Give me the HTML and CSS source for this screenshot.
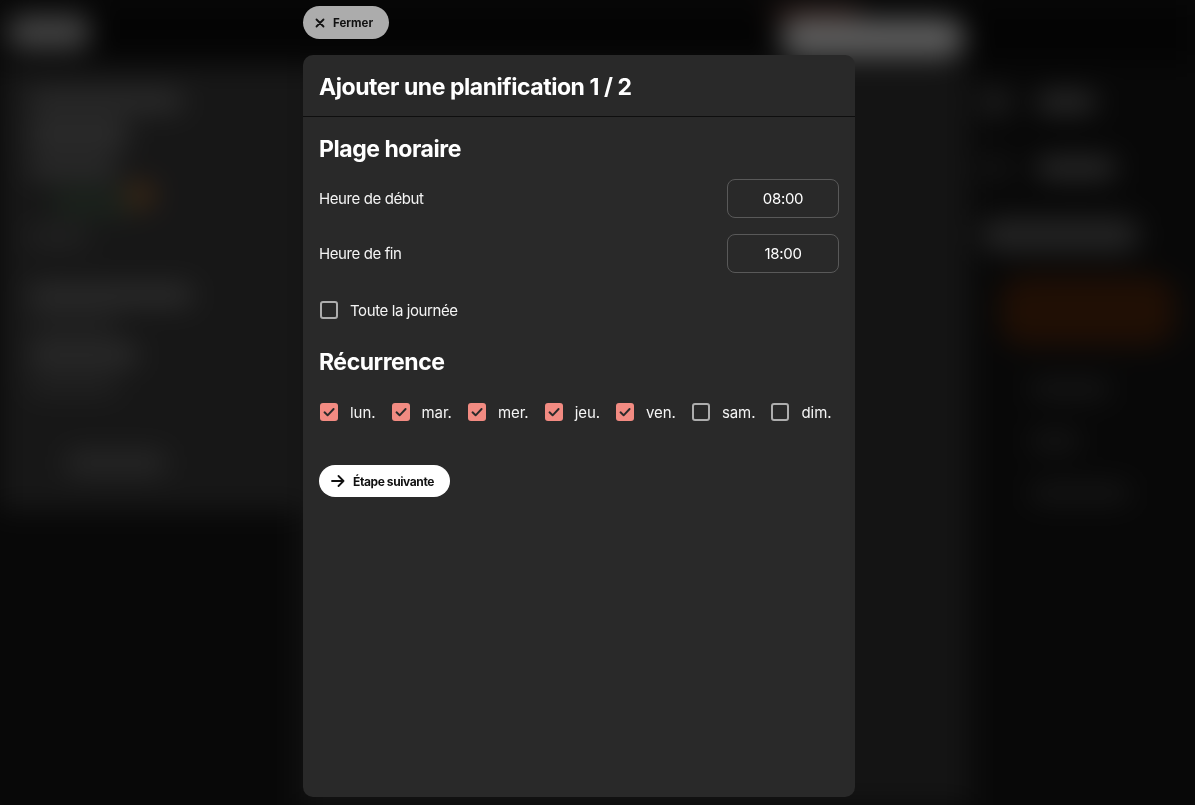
FILE: index.html
```html
<!DOCTYPE html>
<html lang="fr">
<head>
<meta charset="utf-8">
<title>Ajouter une planification</title>
<link rel="stylesheet" href="styles.css">
</head>
<body>
<div class="backdrop" aria-hidden="true">
  <div class="bd-top">
    <div class="bd-logo"></div>
    <div class="bd-topright">
      <div class="bd-glow-red"></div>
      <div class="bd-pill"></div>
    </div>
  </div>
  <div class="bd-body">
    <div class="bd-side">
      <div class="bd-card">
        <div class="bd-line w155"></div>
        <div class="bd-line w100 h24"></div>
        <div class="bd-orange"></div>
        <div class="bd-line w90"></div>
        <div class="bd-green"></div>
        <div class="bd-line w60 dim"></div>
        <div class="bd-line w165 mt"></div>
        <div class="bd-line w90 dim"></div>
        <div class="bd-line w110"></div>
        <div class="bd-line w90 dim"></div>
        <div class="bd-line w100 btm"></div>
      </div>
    </div>
    <div class="bd-main"></div>
    <div class="bd-right">
      <div class="bd-ritem"><span class="bd-dot"></span><span class="bd-line w60"></span></div>
      <div class="bd-ritem"><span class="bd-dot dim"></span><span class="bd-line w80"></span></div>
      <div class="bd-rpill"></div>
      <div class="bd-rglow"></div>
      <div class="bd-line w80 ml"></div>
      <div class="bd-line w50 ml"></div>
      <div class="bd-line w100 ml"></div>
    </div>
  </div>
</div>

<div class="overlay">
  <button class="close-btn" type="button">
    <svg width="10" height="10" viewBox="0 0 10 10" aria-hidden="true"><path d="M1.5 1.5 8.5 8.5M8.5 1.5 1.5 8.5" stroke="#111" stroke-width="1.8" stroke-linecap="round"/></svg>
    <span>Fermer</span>
  </button>

  <section class="modal">
    <header class="modal-head">
      <h1 class="modal-title">Ajouter une planification 1 / 2</h1>
    </header>
    <div class="modal-body">
      <h2 class="section-title">Plage horaire</h2>

      <div class="time-row first">
        <span class="time-label">Heure de début</span>
        <span class="time-input">08:00</span>
      </div>
      <div class="time-row">
        <span class="time-label">Heure de fin</span>
        <span class="time-input">18:00</span>
      </div>

      <label class="check-row allday">
        <span class="box"></span>
        <span class="check-text">Toute la journée</span>
      </label>

      <h2 class="section-title recur">Récurrence</h2>

      <div class="days">
        <label class="day"><span class="box on"><svg viewBox="0 0 18 18"><path d="M4.5 9.3 7.6 12.3 13.6 6" /></svg></span><span class="day-text">lun.</span></label>
        <label class="day"><span class="box on"><svg viewBox="0 0 18 18"><path d="M4.5 9.3 7.6 12.3 13.6 6" /></svg></span><span class="day-text">mar.</span></label>
        <label class="day"><span class="box on"><svg viewBox="0 0 18 18"><path d="M4.5 9.3 7.6 12.3 13.6 6" /></svg></span><span class="day-text">mer.</span></label>
        <label class="day"><span class="box on"><svg viewBox="0 0 18 18"><path d="M4.5 9.3 7.6 12.3 13.6 6" /></svg></span><span class="day-text">jeu.</span></label>
        <label class="day"><span class="box on"><svg viewBox="0 0 18 18"><path d="M4.5 9.3 7.6 12.3 13.6 6" /></svg></span><span class="day-text">ven.</span></label>
        <label class="day"><span class="box"></span><span class="day-text">sam.</span></label>
        <label class="day"><span class="box"></span><span class="day-text">dim.</span></label>
      </div>

      <button class="next-btn" type="button">
        <svg width="14" height="12" viewBox="0 0 14 12" aria-hidden="true"><path d="M1 6H12.5M7.5 1 12.5 6 7.5 11" fill="none" stroke="#111" stroke-width="1.8" stroke-linecap="round" stroke-linejoin="round"/></svg>
        <span>Étape suivante</span>
      </button>
    </div>
  </section>
</div>
</body>
</html>
```

FILE: styles.css
```css
* { box-sizing: border-box; }

html, body {
  margin: 0;
  height: 100%;
}

body {
  background: #0a0a0a;
  font-family: Inter, "Noto Sans", "Liberation Sans", sans-serif;
  color: #fff;
  overflow: hidden;
}

/* ---------- blurred application behind the dialog ---------- */
.backdrop {
  position: fixed;
  inset: -20px;
  padding: 20px;
  display: flex;
  flex-direction: column;
  filter: blur(14px);
  background: #0a0a0a;
}

.bd-top {
  height: 64px;
  flex: none;
  display: flex;
  justify-content: space-between;
  align-items: center;
  padding: 0 230px 0 8px;
  background: #040404;
}

.bd-logo {
  width: 82px;
  height: 34px;
  border-radius: 12px;
  background: #444;
}

.bd-topright {
  display: flex;
  flex-direction: column;
  align-items: flex-start;
  gap: 0;
}

.bd-glow-red {
  width: 90px;
  height: 12px;
  margin-left: -10px;
  background: #34201c;
  border-radius: 6px;
}

.bd-pill {
  width: 185px;
  height: 40px;
  border-radius: 20px;
  background: #5c5c5c;
}

.bd-body {
  flex: 1;
  display: flex;
}

.bd-side {
  width: 300px;
  flex: none;
  display: flex;
  flex-direction: column;
  background: #080808;
}

.bd-card {
  display: flex;
  flex-direction: column;
  gap: 12px;
  padding: 28px 20px 36px 28px;
  background: #171717;
  position: relative;
}

.bd-line {
  display: block;
  height: 18px;
  border-radius: 8px;
  background: #303030;
}
.bd-line.dim { background: #232323; }
.bd-line.h24 { height: 24px; }
.bd-line.mt { margin-top: 28px; }
.bd-line.btm { margin: 46px 0 0 38px; background: #282828; height: 22px; }
.bd-line.ml { margin-left: 50px; background: #171717; }

.w50 { width: 50px; }
.w60 { width: 60px; }
.w80 { width: 80px; }
.w90 { width: 90px; }
.w100 { width: 100px; }
.w110 { width: 110px; }
.w155 { width: 155px; }
.w165 { width: 165px; }

.bd-orange {
  position: absolute;
  left: 125px;
  top: 118px;
  width: 30px;
  height: 26px;
  border-radius: 50%;
  background: #3f2814;
}

.bd-green {
  width: 80px;
  height: 28px;
  margin-left: 25px;
  border-radius: 8px;
  background: #1b231c;
}

.bd-main {
  flex: 1;
  background: #141414;
}

.bd-right {
  width: 225px;
  flex: none;
  display: flex;
  flex-direction: column;
  gap: 34px;
  padding: 22px 40px 0 10px;
  background: #080808;
}

.bd-ritem {
  display: flex;
  align-items: center;
  gap: 24px;
}

.bd-dot {
  width: 32px;
  height: 32px;
  border-radius: 50%;
  background: #1e1e1e;
}
.bd-dot.dim { background: #131313; }

.bd-rpill {
  height: 34px;
  width: 160px;
  border-radius: 17px;
  background: #242424;
}

.bd-rglow {
  height: 70px;
  width: 175px;
  margin: -10px 0 0 20px;
  border-radius: 24px;
  background: #200f05;
}

/* ---------- overlay + dialog ---------- */
.overlay {
  position: fixed;
  inset: 0;
  display: flex;
  flex-direction: column;
  align-items: flex-start;
  padding: 6px 0 8px 303px;
}

.close-btn {
  display: inline-flex;
  align-items: center;
  gap: 8px;
  height: 33px;
  padding: 0 16px 0 12px;
  border: none;
  border-radius: 17px;
  background: #acacac;
  color: #111;
  font-family: inherit;
  font-size: 11.5px;
  font-weight: 700;
  letter-spacing: 0;
}

.modal {
  margin-top: 16px;
  width: 552px;
  flex: 1;
  background: #292929;
  border-radius: 10px;
  display: flex;
  flex-direction: column;
}

.modal-head {
  height: 62px;
  flex: none;
  display: flex;
  align-items: center;
  padding: 2px 16px 0;
  border-bottom: 1px solid #0e0e0e;
}

.modal-title {
  margin: 0;
  font-size: 23px;
  font-weight: 700;
  letter-spacing: -0.45px;
}

.modal-body {
  padding: 18px 16px 16px;
  display: flex;
  flex-direction: column;
  align-items: stretch;
}

.section-title {
  margin: 0;
  font-size: 23px;
  line-height: 28px;
  font-weight: 700;
  letter-spacing: -0.45px;
}

.time-row {
  display: flex;
  align-items: center;
  justify-content: space-between;
  margin-top: 16px;
}

.time-label,
.check-text {
  font-size: 15px;
  letter-spacing: -0.4px;
  color: #f4f4f4;
}

.day-text {
  font-size: 15px;
  letter-spacing: -0.05px;
  color: #f4f4f4;
}

.time-input {
  width: 112px;
  height: 39px;
  display: flex;
  align-items: center;
  justify-content: center;
  border: 1px solid #595959;
  border-radius: 8px;
  font-size: 15px;
  letter-spacing: -0.3px;
}

.check-row {
  display: flex;
  align-items: center;
  height: 24px;
  gap: 12px;
  margin-top: 25px;
  padding-left: 1px;
}

.box {
  width: 18px;
  height: 18px;
  flex: none;
  border: 2px solid #adadad;
  border-radius: 3px;
  display: flex;
}

.box.on {
  border: none;
  background: #f28b82;
}

.box svg {
  width: 18px;
  height: 18px;
  fill: none;
  stroke: #2a2a2a;
  stroke-width: 1.9;
  stroke-linecap: round;
  stroke-linejoin: round;
}

.recur { margin-top: 26px; }

.days {
  display: flex;
  align-items: center;
  gap: 16px;
  height: 24px;
  margin-top: 24px;
  padding-left: 1px;
}

.day {
  display: flex;
  align-items: center;
  gap: 12px;
}

.next-btn {
  align-self: flex-start;
  margin-top: 41px;
  height: 32px;
  display: inline-flex;
  align-items: center;
  gap: 8px;
  padding: 0 16px 0 12px;
  border: none;
  border-radius: 16px;
  background: #fff;
  color: #111;
  font-family: inherit;
  font-size: 12px;
  font-weight: 700;
  letter-spacing: -0.4px;
}
```
